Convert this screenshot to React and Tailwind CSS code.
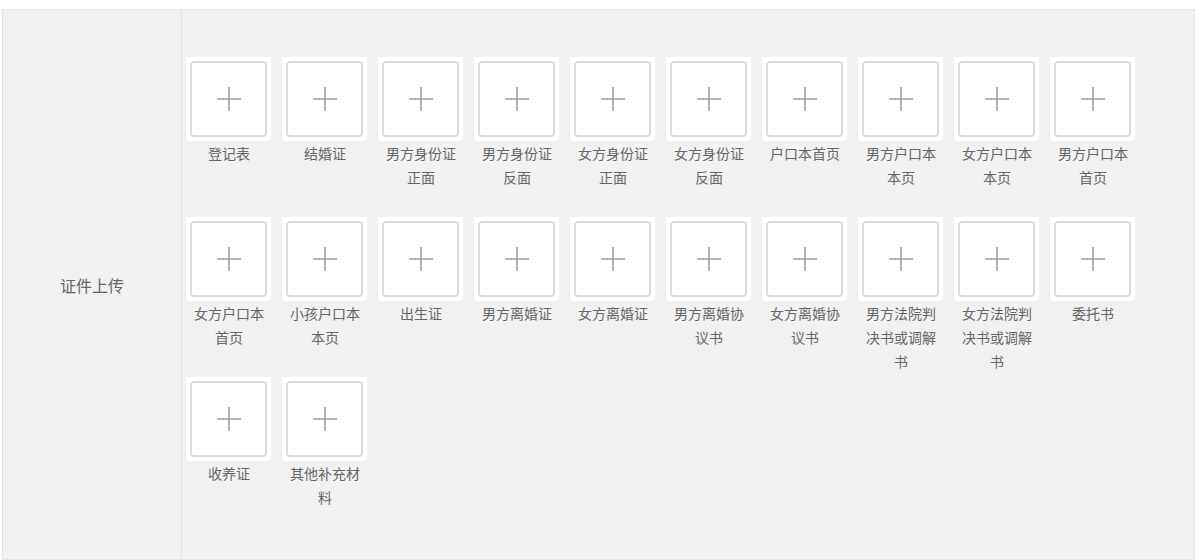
const items = [
  '登记表',
  '结婚证',
  '男方身份证正面',
  '男方身份证反面',
  '女方身份证正面',
  '女方身份证反面',
  '户口本首页',
  '男方户口本本页',
  '女方户口本本页',
  '男方户口本首页',
  '女方户口本首页',
  '小孩户口本本页',
  '出生证',
  '男方离婚证',
  '女方离婚证',
  '男方离婚协议书',
  '女方离婚协议书',
  '男方法院判决书或调解书',
  '女方法院判决书或调解书',
  '委托书',
  '收养证',
  '其他补充材料',
];

const UploadItem = ({ label }) => (
  <div className="w-[86px] h-[160px] mr-[10px]">
    <div className="w-[85px] h-[84px] bg-white p-[4px]">
      <div className="w-full h-full border-2 border-[#dcdcdc] rounded-[4px] bg-white flex items-center justify-center">
        <svg width="26" height="26" viewBox="0 0 26 26">
          <line x1="13" y1="1" x2="13" y2="25" stroke="#999" strokeWidth="1.5" />
          <line x1="1" y1="13" x2="25" y2="13" stroke="#999" strokeWidth="1.5" />
        </svg>
      </div>
    </div>
    <p className="text-center text-[14px] leading-[24px] text-[#666] px-[5px] break-all">{label}</p>
  </div>
);

export default function App() {
  return (
    <div
      className="w-[1200px] h-[560px] bg-white pt-[9px] pl-[2px] pr-[5px]"
      style={{ fontFamily: '"Microsoft YaHei", "Noto Sans CJK SC", sans-serif' }}
    >
      <div className="flex h-[551px] border border-[#e3e3e3] bg-[#f1f1f1]">
        <div className="w-[179px] shrink-0 border-r border-[#e3e3e3] flex items-center justify-center text-[16px] text-[#666]">
          证件上传
        </div>
        <div className="flex-1 flex flex-wrap content-start pt-[47px] pl-[4px]">
          {items.map((label) => (
            <UploadItem key={label} label={label} />
          ))}
        </div>
      </div>
    </div>
  );
}
